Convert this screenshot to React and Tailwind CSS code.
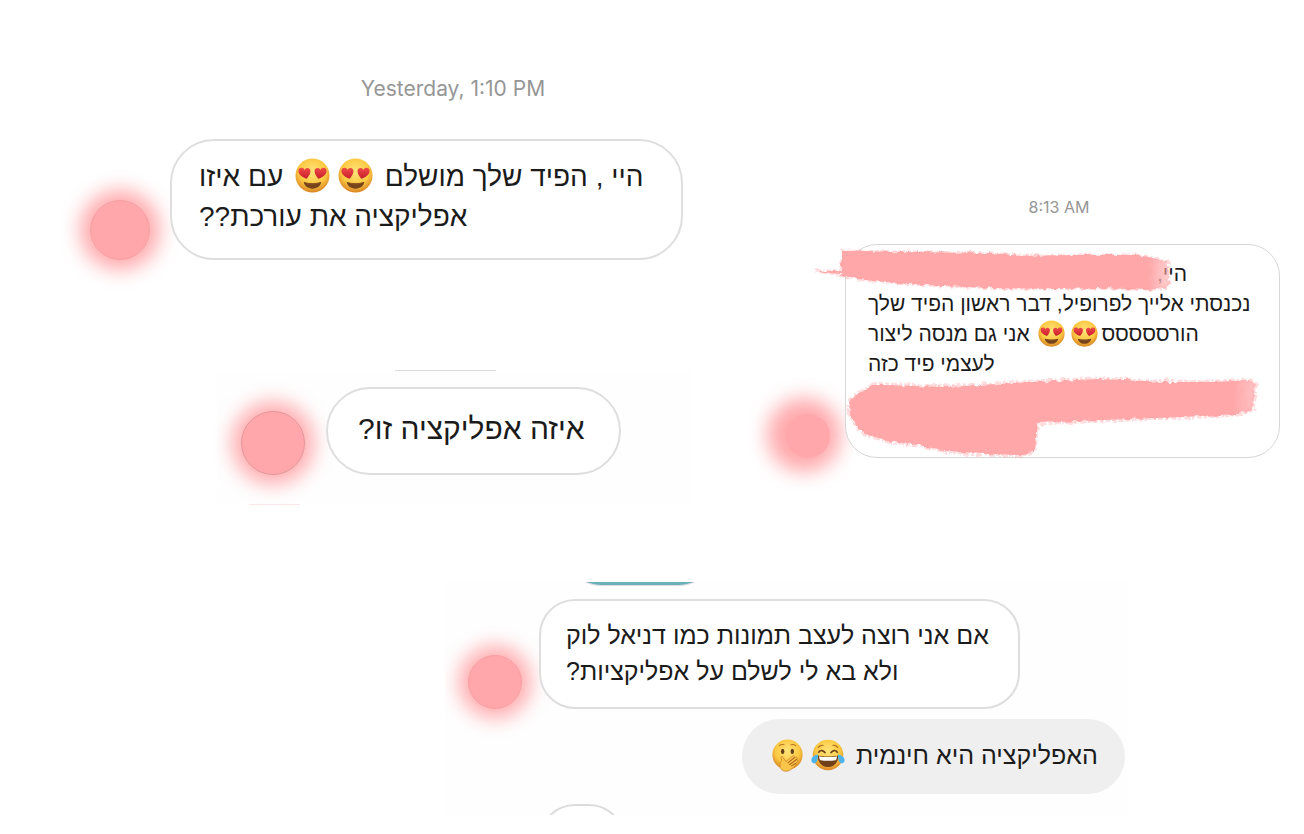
import React from "react";

function HeartEyes({ className }) {
  return (
    <svg viewBox="0 0 36 36" role="img" aria-label="😍" className={className}>
      <defs>
        <radialGradient id="face" cx="50%" cy="38%" r="62%">
          <stop offset="0" stopColor="#ffe47a" />
          <stop offset="0.65" stopColor="#fbc841" />
          <stop offset="1" stopColor="#d98424" />
        </radialGradient>
        <linearGradient id="heart" x1="0" y1="0" x2="0" y2="1">
          <stop offset="0" stopColor="#ee4a45" />
          <stop offset="1" stopColor="#c91d2c" />
        </linearGradient>
      </defs>
      <circle cx="18" cy="18" r="17.5" fill="url(#face)" />
      <path d="M12 21.400C8 19.800 3.400 17 3.500 13.300C3.700 9.400 8.600 9.200 9.900 12.300C11.600 9.200 16.200 10 15.900 14C15.600 17.200 13.500 19.600 12 21.400Z" fill="url(#heart)" />
      <path d="M24 21.400C28 19.800 32.600 17 32.500 13.300C32.300 9.400 27.400 9.200 26.100 12.300C24.400 9.200 19.800 10 20.100 14C20.400 17.200 22.500 19.600 24 21.400Z" fill="url(#heart)" />
      <path d="M9 24.500C12 26.300 24 26.300 27 24.500C26.700 28.800 22.800 31.500 18 31.500S9.300 28.800 9 24.500Z" fill="#77431b" />
      <path d="M11.500 25.600C15 26.700 21 26.700 24.500 25.600C23.500 27.300 12.500 27.300 11.500 25.600Z" fill="#9d6427" />
    </svg>
  );
}

function JoyTears({ className }) {
  return (
    <svg viewBox="0 0 38 36" role="img" aria-label="😂" className={className}>
      <circle cx="19" cy="18" r="17.200" fill="url(#face)" />
      <path d="M8.500 14.800C10.500 12.200 13.500 12.400 15.600 15.200M29.500 14.800C27.500 12.200 24.500 12.400 22.400 15.200" fill="none" stroke="#6b3f17" strokeWidth="1.900" strokeLinecap="round" />
      <path d="M8 9.500C9.500 7.500 11.500 6.800 13.500 7M30 9.500C28.500 7.500 26.500 6.800 24.500 7" fill="none" stroke="#a8661e" strokeWidth="1.200" strokeLinecap="round" />
      <path d="M7.500 18.500C13 20 25 20 30.500 18.500C31 26 26 31.500 19 31.500S7 26 7.500 18.500Z" fill="#70401b" />
      <path d="M9 19.300C14 20.600 24 20.600 29 19.300C29 22 28.300 23.400 27.500 23.800C22 24.800 16 24.800 10.500 23.800C9.500 23 9 21 9 19.300Z" fill="#fff" />
      <path d="M8 17.500C3.500 18.200 .300 20.500 .300 24C.300 28 5.800 28.500 6.900 24.500C7.500 22.300 7.500 20 8 17.500Z" fill="#4fb3ea" />
      <path d="M30 17.500C34.500 18.200 37.700 20.500 37.700 24C37.700 28 32.200 28.500 31.100 24.500C30.500 22.300 30.500 20 30 17.500Z" fill="#4fb3ea" />
    </svg>
  );
}

function HandOverMouth({ className }) {
  return (
    <svg viewBox="0 0 36 38" role="img" aria-label="🤭" className={className}>
      <circle cx="18" cy="18" r="17.500" fill="url(#face)" />
      <ellipse cx="12.400" cy="14.300" rx="2" ry="3" fill="#63401b" />
      <ellipse cx="23.600" cy="14.300" rx="2" ry="3" fill="#63401b" />
      <path d="M8.500 7.500C10 6.200 12 5.800 14 6.500M22 6.500C24 5.800 26 6.200 27.500 7.500" fill="none" stroke="#b97624" strokeWidth="1.200" strokeLinecap="round" />
      <path d="M11 23C9.500 20.500 11.500 19 12.800 21.200L16 26L24 19.800C26 18.600 27.200 20.400 25.700 21.700L27.500 21.300C29.500 20.800 30.200 22.500 28.600 23.600L29 24.200C30.300 24.400 30.300 26.200 29 27L27.500 28.300C28.500 28.800 28.300 30 27.400 30.500C23.500 33.500 21 37.300 16.500 37.300C10 37.300 8.500 32 9.500 28.500C10 26.500 11.500 25.500 11 23Z" fill="#fbc549" stroke="#c87a24" strokeWidth="0.800" />
      <path d="M18.500 27.500L25.700 21.700M20.500 29.500L28.600 23.600M22.500 31L27.500 28.300" fill="none" stroke="#a9631d" strokeWidth="1.200" strokeLinecap="round" />
    </svg>
  );
}

function Scribbles() {
  const top =
    "M29 7L90 8L180 9L207 12L260 11L325 11L340 14L355 18L356 40L350 44L336 46L290 44L240 45L180 44L130 42L95 40L60 37L37 34L27 30L14 29L1 27L29 27Z";
  const bottom =
    "M60 141L70 141L135 143L200 139L285 135L310 136L350 138L400 138L437 136L442 141L440 165L425 170L370 173L290 176L224 179L221 208L205 211L145 209L105 201L75 197L52 190L42 180L36 166L38 154Z";
  return (
    <svg viewBox="1 1 450 220" aria-hidden="true" className="pointer-events-none absolute -left-8 top-0 h-[220px] w-[450px] max-w-none">
      <defs>
        <linearGradient id="topFade" gradientUnits="userSpaceOnUse" x1="335" y1="0" x2="358" y2="0">
          <stop offset="0" stopColor="#ffa7a9" />
          <stop offset="1" stopColor="#ffa7a9" stopOpacity="0.500" />
        </linearGradient>
        <linearGradient id="bottomFade" gradientUnits="userSpaceOnUse" x1="420" y1="0" x2="442" y2="0">
          <stop offset="0" stopColor="#ffa7a9" />
          <stop offset="1" stopColor="#ffa7a9" stopOpacity="0.700" />
        </linearGradient>
        <filter id="rough" x="-5%" y="-10%" width="110%" height="120%">
          <feTurbulence type="fractalNoise" baseFrequency="0.160" numOctaves="3" seed="4" result="noise" />
          <feDisplacementMap in="SourceGraphic" in2="noise" scale="5" xChannelSelector="R" yChannelSelector="G" />
        </filter>
      </defs>
      <g filter="url(#rough)">
        <path d={top} fill="url(#topFade)" />
        <path d={bottom} fill="url(#bottomFade)" />
        <path d={top} fill="none" stroke="#ffa7a9" strokeWidth="3" strokeDasharray="3 2 5 1" strokeOpacity="0.400" />
        <path d={bottom} fill="none" stroke="#ffa7a9" strokeWidth="5" strokeDasharray="3 2 6 2" strokeOpacity="0.400" />
      </g>
      <path d="M29 7H60V27H29Z" fill="#ffa7a9" />
    </svg>
  );
}

const glow = "shrink-0 rounded-full bg-[#ffa7aa]";
const bubble = "rounded-[44px] border-2 border-[#dedede] bg-white";
const hebrew = "text-left text-[#1b1b1b] font-['Liberation_Sans',sans-serif]";

function Line({ children }) {
  return <span className="block whitespace-nowrap">{children}</span>;
}

export default function App() {
  return (
    <main className="min-h-screen overflow-hidden bg-white font-[Inter,sans-serif]">
      <div className="flex items-start">
        <div className="min-w-0 flex-1">
          <section className="pt-[76px]">
            <time className="block pl-[120px] text-center text-[21px] leading-[26px] text-[#969696]">Yesterday, 1:10 PM</time>
            <div className="mt-[37px] flex items-end gap-5 pl-[90px]">
              <div className={`${glow} size-[60px] border border-[#f7a0a3] shadow-[0_0_20px_10px_#ffa9ac]`} />
              <div className={`${bubble} h-[121px] w-[513px] pl-[27px] pt-4`}>
                <p dir="rtl" className={`${hebrew} text-[28px] leading-[40px]`}>
                  <Line>
                    היי , הפיד שלך מושלם <HeartEyes className="mx-1 inline size-[35px] align-[-7px]" />
                    <HeartEyes className="mx-1 inline size-[35px] align-[-7px]" /> עם איזו
                  </Line>
                  <Line>אפליקציה את עורכת??</Line>
                </p>
              </div>
            </div>
          </section>

          <section className="ml-[217px] mt-[110px] w-[474px] bg-[#fefefe]">
            <div className="ml-[178px] h-px w-[101px] bg-[#dddddd]" />
            <div className="mt-4 flex items-end gap-[21px] pl-6">
              <div className={`${glow} size-16 border border-[#e3969a] shadow-[0_0_20px_9px_#ffa9ac]`} />
              <div className={`${bubble} h-[88px] w-[295px] pl-[30px] pt-5`}>
                <p dir="rtl" className={`${hebrew} text-[30px] leading-[40px]`}>
                  <Line>איזה אפליקציה זו?</Line>
                </p>
              </div>
            </div>
            <div className="ml-8 mt-[29px] h-px w-[51px] bg-[#fbe9ea]" />
          </section>
        </div>

        <section className="w-[518px] shrink-0 pt-[197px]">
          <time className="block pl-[52px] pr-6 text-center text-base leading-5 text-[#969696]">8:13 AM</time>
          <div className="mt-[27px] flex items-end gap-[15px]">
            <div className={`${glow} size-11 shadow-[-4px_-1px_20px_15px_#ffa9ac]`} />
            <div className="relative h-[214px] w-[435px] rounded-[32px] border border-[#d6d6d6] bg-white pl-[22px] pt-[14px]">
              <p dir="rtl" className={`${hebrew} text-[21px] leading-[30px]`}>
                <span className="block pr-[92px] text-right">היי,</span>
                <Line>נכנסתי אלייך לפרופיל, דבר ראשון הפיד שלך</Line>
                <Line>
                  הורססססס<HeartEyes className="mx-[3px] inline size-[27px] align-[-6px]" />
                  <HeartEyes className="mx-[3px] inline size-[27px] align-[-6px]" /> אני גם מנסה ליצור
                </Line>
                <Line>לעצמי פיד כזה</Line>
              </p>
              <Scribbles />
            </div>
          </div>
        </section>
      </div>

      <section className="ml-[445px] mt-[77px] h-[233px] w-[682px] overflow-hidden bg-[#fefefe]">
        <div className="ml-[120px] flex h-1 w-[150px] items-end overflow-hidden">
          <div className="h-[72px] w-full shrink-0 rounded-full border-b border-[#dcdcdc] bg-[#6bb0b8]" />
        </div>
        <div className="mt-[13px] flex items-end gap-[17px] pl-[23px]">
          <div className={`${glow} size-[54px] border border-[#f7a0a3] shadow-[0_0_20px_9px_#ffa9ac]`} />
          <div className="h-[110px] w-[481px] rounded-[36px] border-2 border-[#dedede] bg-white pl-[25px] pt-4">
            <p dir="rtl" className={`${hebrew} text-[25px] leading-[36px]`}>
              <Line>אם אני רוצה לעצב תמונות כמו דניאל לוק</Line>
              <Line>ולא בא לי לשלם על אפליקציות?</Line>
            </p>
          </div>
        </div>
        <div className="ml-[297px] mt-[10px] h-[75px] w-[383px] rounded-full bg-[#efefef] pl-[30px] pt-[18px]">
          <p dir="rtl" className={`${hebrew} text-[25px] leading-[36px]`}>
            <Line>
              האפליקציה היא חינמית <JoyTears className="ml-2 mr-1 inline h-8 w-[34px] align-[-7px]" />
              <HandOverMouth className="inline h-[33px] w-[31px] align-[-8px]" />
            </Line>
          </p>
        </div>
        <div className="ml-[94px] mt-[10px] h-[73px] w-[86px] rounded-[36px] border-2 border-[#dcdcdc] bg-white" />
      </section>
    </main>
  );
}
